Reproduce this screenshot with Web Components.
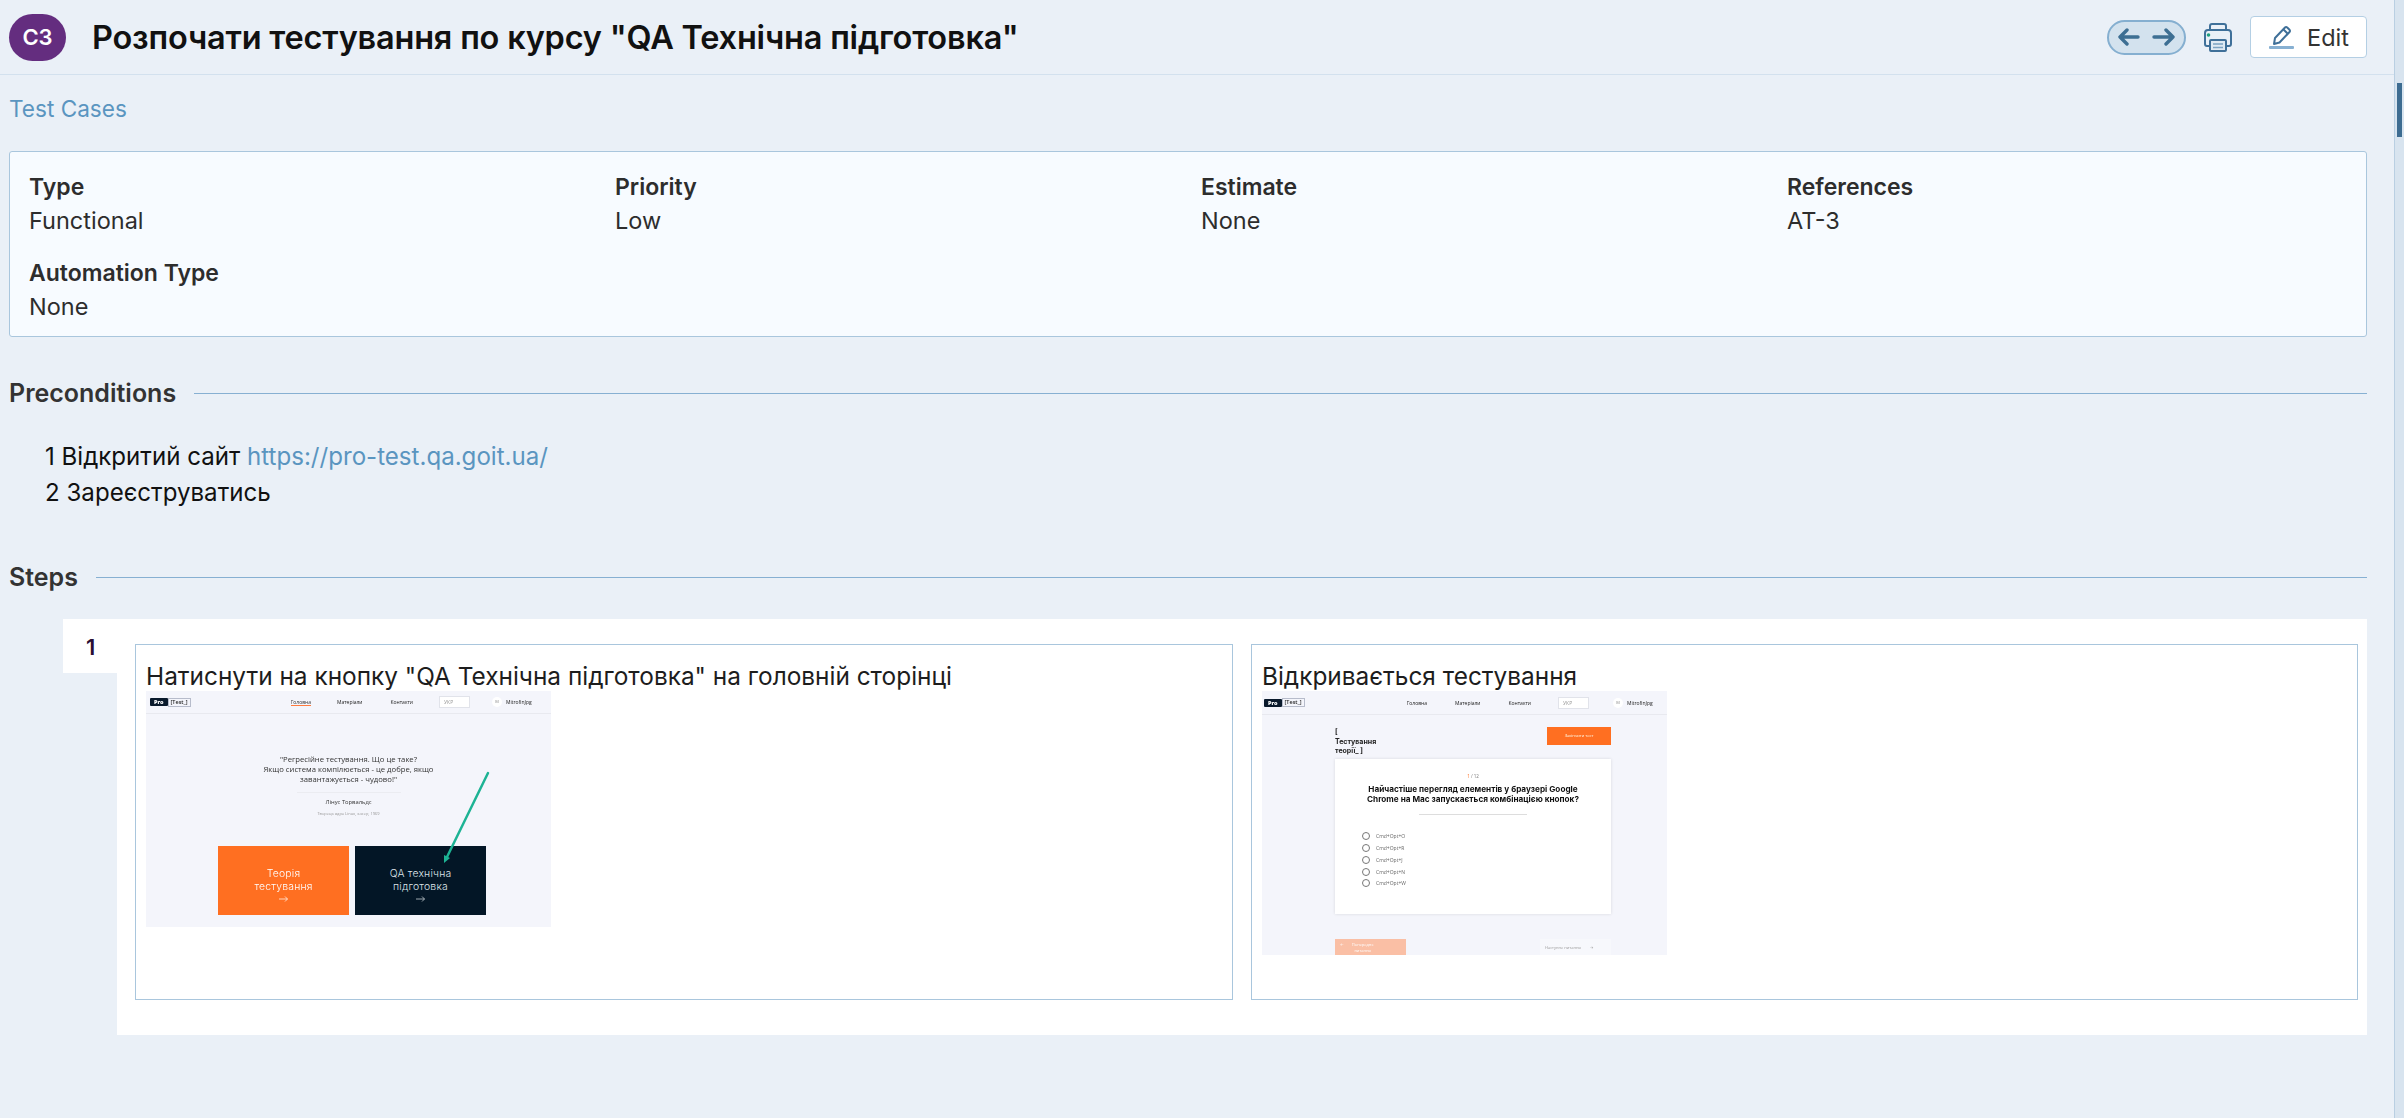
<!DOCTYPE html>
<html>
<head>
<meta charset="utf-8">
<title>C3</title>
<style>
  html, body { margin: 0; height: 100%; background: #eaf0f7; overflow: hidden; }
  body { font-family: Inter, "Noto Sans", sans-serif; color: #2d2d2d; }
</style>
</head>
<body>
<case-page>
  <case-header slot="top" badge="C3" heading='Розпочати тестування по курсу "QA Технічна підготовка"'></case-header>
  <a-crumb>Test Cases</a-crumb>
  <field-card>
    <field-item label="Type" value="Functional"></field-item>
    <field-item label="Priority" value="Low"></field-item>
    <field-item label="Estimate" value="None"></field-item>
    <field-item label="References" value="AT-3"></field-item>
    <field-item label="Automation Type" value="None"></field-item>
  </field-card>
  <section-title>Preconditions</section-title>
  <pre-conditions></pre-conditions>
  <section-title class="steps">Steps</section-title>
  <step-row number="1">
    <step-cell class="wide" text='Натиснути на кнопку "QA Технічна підготовка" на головній сторінці'><shot-landing></shot-landing></step-cell>
    <step-cell text="Відкривається тестування"><shot-quiz></shot-quiz></step-cell>
  </step-row>
</case-page>

<script>
  function define(name, html, init) {
    customElements.define(name, class extends HTMLElement {
      constructor() {
        super()
        this.attachShadow({ mode: 'open' })
        this.shadowRoot.innerHTML = html
      }
      connectedCallback() {
        if (init) init(this, this.shadowRoot)
      }
    })
  }

  define('case-page', `
    <style>
      :host { display: flex; height: 1118px; }
      .main { width: 2394px; display: flex; flex-direction: column; }
      .content { padding: 0 27px 0 9px; display: flex; flex-direction: column; }
      .bar { width: 10px; background: #d8e4ef; border-left: 1px solid #b9cfe2; box-sizing: border-box; }
      .thumb { width: 5px; height: 54px; margin: 83px 0 0 2px; background: #3d6c91; }
    </style>
    <div class="main">
      <slot name="top"></slot>
      <div class="content"><slot></slot></div>
    </div>
    <div class="bar"><div class="thumb"></div></div>
  `)

  define('case-header', `
    <style>
      :host { display: flex; align-items: center; height: 74px; border-bottom: 1px solid #d3e1ee; padding: 0 27px 0 9px; }
      .badge { width: 57px; height: 47px; border-radius: 24px; background: #642d7f; color: #fff; font-weight: 600; font-size: 22px; display: flex; align-items: center; justify-content: center; }
      h1 { margin: 0 0 0 26px; font-size: 32.500px; font-weight: 600; color: #111; flex: 1; letter-spacing: -0.2px; white-space: nowrap; }
      .pill { width: 79px; height: 35px; box-sizing: border-box; border: 2px solid #85afd0; border-radius: 18px; background: #d3e2ee; display: flex; align-items: center; justify-content: center; }
      .print { margin-left: 18px; display: block; }
      .edit { margin-left: 18px; width: 117px; height: 42px; box-sizing: border-box; background: #fff; border: 1px solid #b4cfe4; border-radius: 4px; display: flex; align-items: center; padding-left: 18px; gap: 12px; font-size: 23.500px; color: #333; }
    </style>
    <div class="badge"></div>
    <h1></h1>
    <div class="pill">
      <svg width="57" height="20" viewBox="0 0 57 20" fill="none" stroke="#3d6f93" stroke-width="3.400" stroke-linecap="round" stroke-linejoin="round">
        <path d="M2 10h18M9 3l-7 7 7 7"/><path d="M36 10h19M48 3l7 7-7 7"/>
      </svg>
    </div>
    <svg class="print" width="28" height="29" viewBox="0 0 28 29" fill="none" stroke="#3f7099" stroke-width="2">
      <path d="M6 8V3a2 2 0 0 1 2-2h12a2 2 0 0 1 2 2v5"/>
      <path d="M6 23H3a2 2 0 0 1-2-2V10a3 3 0 0 1 3-3h20a3 3 0 0 1 3 3v11a2 2 0 0 1-2 2h-3"/>
      <rect x="6" y="17" width="16" height="11" rx="1" fill="#dfeaf3"/>
      <path d="M9 21h10M9 24.500h10" stroke-width="1.500" stroke="#7ba3c2"/>
      <circle cx="4.500" cy="12" r="1.800" fill="#1f9f7f" stroke="none"/>
    </svg>
    <div class="edit">
      <svg width="26" height="26" viewBox="0 0 26 26" fill="none">
        <path d="M5 20l1-6L16 3.500a1.500 1.500 0 0 1 2.200 0l2.300 2.300a1.500 1.500 0 0 1 0 2.200L10.500 18.500z" stroke="#3f7099" stroke-width="2" stroke-linejoin="round"/>
        <path d="M14.500 5.500l4.500 4.500" stroke="#3f7099" stroke-width="2"/>
        <rect x="0" y="22" width="25" height="3" rx="1" fill="#87b0d2"/>
      </svg>
      <span>Edit</span>
    </div>
  `, (el, root) => {
    root.querySelector('.badge').textContent = el.getAttribute('badge')
    root.querySelector('h1').textContent = el.getAttribute('heading')
  })

  define('a-crumb', `
    <style>
      :host { display: block; color: #5a95c0; font-size: 22.600px; line-height: 28px; margin-top: 20px; }
    </style>
    <slot></slot>
  `)

  define('field-card', `
    <style>
      :host { display: grid; grid-template-columns: repeat(4, 586px); row-gap: 6px; margin-top: 28px; height: 186px; box-sizing: border-box; padding: 18px 0 0 19px; background: #f7fbff; border: 1px solid #a9c6dd; border-radius: 3px; overflow: hidden; }
    </style>
    <slot></slot>
  `)

  define('field-item', `
    <style>
      :host { display: block; font-size: 23.500px; line-height: 34px; height: 68px; color: #2d2d2d; }
      b { display: block; font-weight: 600; font-size: 23px; }
    </style>
    <b></b><span></span>
  `, (el, root) => {
    root.querySelector('b').textContent = el.getAttribute('label')
    root.querySelector('span').textContent = el.getAttribute('value')
  })

  define('section-title', `
    <style>
      :host { display: flex; align-items: center; gap: 18px; font-size: 25px; font-weight: 600; line-height: 32px; color: #333; margin-top: 40px; white-space: nowrap; }
      :host(.steps) { margin-top: 50px; }
      i { flex: 1; height: 1px; background: #87b0d2; }
    </style>
    <span><slot></slot></span><i></i>
  `)

  define('pre-conditions', `
    <style>
      :host { display: block; padding-left: 36px; margin-top: 30px; font-size: 24.100px; line-height: 36px; color: #111; }
      a { color: #5a95c0; text-decoration: none; }
    </style>
    <div>1 Відкритий сайт <a>https://pro-test.qa.goit.ua/</a></div>
    <div>2 Зареєструватись</div>
  `)

  define('step-row', `
    <style>
      :host { display: flex; margin: 26px 0 0 54px; align-items: flex-start; }
      .num { width: 54px; height: 54px; background: #fff; box-sizing: border-box; padding: 15px 0 0 23px; font-size: 22px; line-height: 26px; font-weight: 600; color: #2b0f33; }
      .body { flex: 1; background: #fff; height: 416px; box-sizing: border-box; padding: 25px 9px 0 18px; display: flex; gap: 18px; }
    </style>
    <div class="num"></div>
    <div class="body"><slot></slot></div>
  `, (el, root) => {
    root.querySelector('.num').textContent = el.getAttribute('number')
  })

  define('step-cell', `
    <style>
      :host { display: block; flex: 1; height: 356px; box-sizing: border-box; border: 1px solid #a9c6dd; padding: 18px 10px 0 10px; background: #fff; }
      :host(.wide) { flex: 0 0 1098px; }
      p { margin: 0 0 2px; font-size: 24.400px; line-height: 26px; color: #1d1d1d; white-space: nowrap; }
    </style>
    <p></p>
    <slot></slot>
  `, (el, root) => {
    root.querySelector('p').textContent = el.getAttribute('text')
  })

  const shotBase = `
    :host { display: block; width: 405px; background: #f4f5fb; font-family: "Open Sans", Inter, sans-serif; color: #222; overflow: hidden; position: relative; }
    .wrap { filter: blur(0.35px); }
    .top { height: 22px; border-bottom: 1px solid #e8e9ef; display: flex; align-items: center; font-size: 5px; white-space: nowrap; }
    .logo { display: flex; align-items: center; height: 8px; font-size: 5.500px; font-weight: 700; }
    .logo b { background: #0a1a2c; color: #fff; padding: 0 4px; height: 8px; line-height: 8px; border-radius: 1px; }
    .logo span { border: 1px solid #b7bccb; color: #222; height: 7px; line-height: 7px; padding: 0 2px; font-weight: 600; }
    .lang { width: 31px; height: 12px; box-sizing: border-box; background: #fff; border: 1px solid #e1e3ea; color: #999; padding-left: 4px; line-height: 10px; }
    .ava { width: 10px; height: 10px; border-radius: 50%; background: #fff; color: #888; text-align: center; line-height: 10px; font-size: 4px; }
  `

  define('shot-landing', `
    <style>
      ${shotBase}
      :host { height: 236px; }
      .logo { margin-left: 4px; }
      .n1 { margin-left: 100px; color: #333; border-bottom: 1px solid #ff7a3d; }
      .n2 { margin-left: 26px; } .n3 { margin-left: 28px; }
      .lang { margin-left: 26px; }
      .ava { margin-left: 22px; margin-right: 4px; }
      .quote { text-align: center; font-size: 7.700px; line-height: 10px; margin-top: 40px; color: #333; }
      hr { width: 104px; height: 1px; border: 0; background: #ebecf1; margin: 8px auto 5px; }
      .who { text-align: center; font-size: 5.800px; line-height: 9px; color: #333; }
      .what { text-align: center; font-size: 4px; line-height: 8px; margin-top: 3px; color: #999; }
      .btns { display: flex; gap: 6px; margin: 28px 0 0 72px; }
      .btn { width: 131px; height: 69px; box-sizing: border-box; padding-top: 9px; color: #fff; font-size: 10.400px; font-weight: 300; line-height: 12.500px; letter-spacing: 0.2px; display: flex; flex-direction: column; align-items: center; justify-content: center; text-align: center; font-family: Inter, sans-serif; }
      .btn svg { display: block; margin-top: 3px; }
      .or { background: #ff6f21; } .dk { background: #031626; color: #dfe5ea; }
      svg.mark { position: absolute; left: 0; top: 0; }
    </style>
    <div class="wrap">
      <div class="top">
        <div class="logo"><b>Pro</b><span>[Test_]</span></div>
        <span class="n1">Головна</span><span class="n2">Матеріали</span><span class="n3">Контакти</span>
        <div class="lang">УКР</div>
        <div class="ava">M</div><span>MitrofinJpg</span>
      </div>
      <div class="quote">"Регресійне тестування. Що це таке?<br>Якщо система компілюється - це добре, якщо<br>завантажується - чудово!"</div>
      <hr>
      <div class="who">Лінус Торвальдс</div>
      <div class="what">Творець ядра Linux, хакер, 1969</div>
      <div class="btns">
        <div class="btn or"><span>Теорія</span><span>тестування</span><svg width="9" height="6" viewBox="0 0 9 6" fill="none" stroke="currentColor" stroke-width=".7"><path d="M0 3h8.500M6 .5L8.500 3 6 5.500"/></svg></div>
        <div class="btn dk"><span>QA технічна</span><span>підготовка</span><svg width="9" height="6" viewBox="0 0 9 6" fill="none" stroke="currentColor" stroke-width=".7"><path d="M0 3h8.500M6 .5L8.500 3 6 5.500"/></svg></div>
      </div>
    </div>
    <svg class="mark" width="405" height="236" viewBox="0 0 405 236">
      <path d="M342 82L301 166" stroke="#1db394" stroke-width="2.500" stroke-linecap="round"/>
      <path d="M298 172l0-8 6 3z" fill="#1db394"/>
    </svg>
  `)

  define('shot-quiz', `
    <style>
      ${shotBase}
      :host { height: 264px; }
      .top { height: 23px; }
      .logo { margin-left: 2px; }
      .n1 { margin-left: 102px; } .n2 { margin-left: 28px; } .n3 { margin-left: 28px; }
      .lang { margin-left: 27px; }
      .ava { margin-left: 24px; margin-right: 4px; }
      .head { display: flex; justify-content: space-between; margin: 12px 56px 0 73px; height: 32px; }
      .ttl { font-size: 7px; font-weight: 700; line-height: 9.500px; color: #222; font-family: Inter, sans-serif; }
      .end { width: 64px; height: 18px; background: #ff6f21; color: #ffe; font-size: 4px; line-height: 18px; text-align: center; }
      .card { margin: 0 56px 0 73px; height: 155px; background: #fff; box-shadow: 0 0 3px rgba(0,0,0,.12); box-sizing: border-box; padding-top: 13px; }
      .cnt { text-align: center; font-size: 4.500px; line-height: 8px; color: #777; }
      .cnt em { color: #ff6f21; font-style: normal; }
      .q { text-align: center; font-size: 8.200px; font-weight: 700; line-height: 10.300px; margin-top: 4px; color: #111; font-family: Inter, sans-serif; white-space: nowrap; }
      hr { width: 108px; height: 1px; border: 0; background: #ddd; margin: 9px auto 16px; }
      .opt { display: flex; align-items: center; gap: 6px; margin-left: 27px; height: 11.700px; font-size: 5px; color: #666; }
      .opt i { width: 6px; height: 6px; border: 1px solid #777; border-radius: 50%; }
      .foot { display: flex; justify-content: space-between; margin: 25px 56px 0 73px; font-size: 4px; }
      .prev { width: 71px; height: 30px; background: #fabfa5; color: #fff; display: flex; gap: 8px; padding: 3px 0 0 5px; box-sizing: border-box; line-height: 5.500px; text-align: center; }
      .next { width: 71px; height: 30px; background: #f7f8fc; color: #999; display: flex; gap: 9px; padding: 6px 0 0 5px; box-sizing: border-box; }
    </style>
    <div class="wrap">
      <div class="top">
        <div class="logo"><b>Pro</b><span>[Test_]</span></div>
        <span class="n1">Головна</span><span class="n2">Матеріали</span><span class="n3">Контакти</span>
        <div class="lang">УКР</div>
        <div class="ava">M</div><span>MitrofinJpg</span>
      </div>
      <div class="head">
        <div class="ttl">[<br>Тестування<br>теорії_ ]</div>
        <div class="end">Закінчити тест</div>
      </div>
      <div class="card">
        <div class="cnt"><em>1</em> / 12</div>
        <div class="q">Найчастіше перегляд елементів у браузері Google<br>Chrome на Mac запускається комбінацією кнопок?</div>
        <hr>
        <div class="opt"><i></i>Cmd+Opt+O</div>
        <div class="opt"><i></i>Cmd+Opt+R</div>
        <div class="opt"><i></i>Cmd+Opt+J</div>
        <div class="opt"><i></i>Cmd+Opt+N</div>
        <div class="opt"><i></i>Cmd+Opt+W</div>
      </div>
      <div class="foot">
        <div class="prev"><span>←</span><span>Попереднє<br>питання</span></div>
        <div class="next"><span>Наступне питання</span><span>→</span></div>
      </div>
    </div>
  `)
</script>
</body>
</html>
